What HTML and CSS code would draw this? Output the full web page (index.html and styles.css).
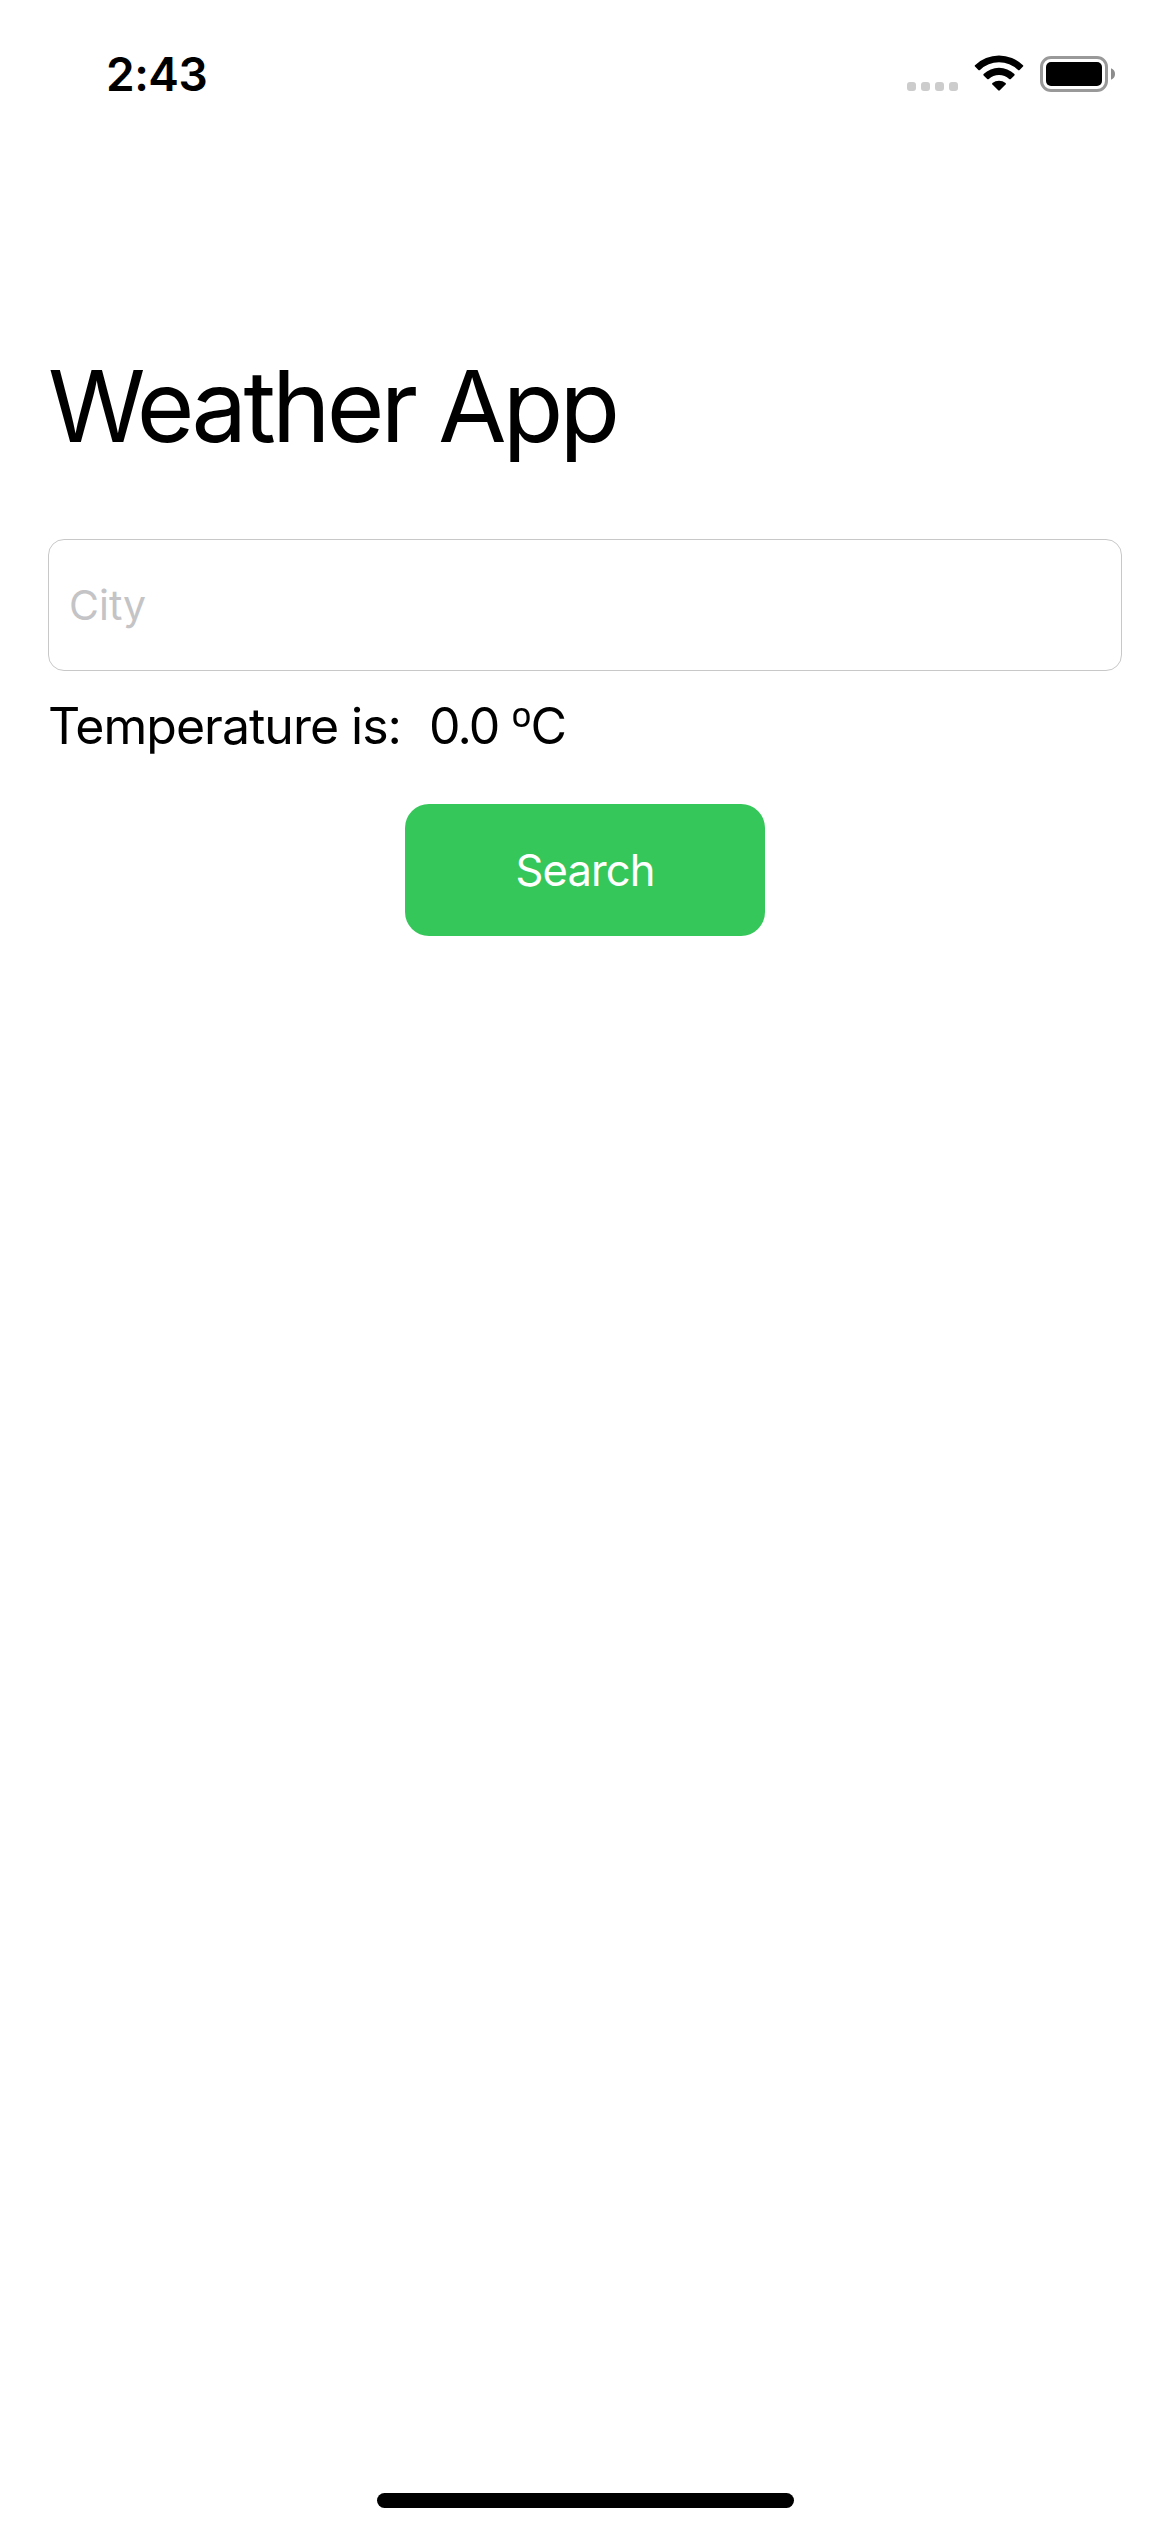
FILE: index.html
```html
<!DOCTYPE html>
<html lang="en">
<head>
<meta charset="utf-8">
<title>Weather App</title>
<link rel="stylesheet" href="styles.css">
</head>
<body>
<div class="screen">
  <header class="status-bar">
    <span class="time">2:43</span>
    <div class="indicators">
      <div class="signal"><i></i><i></i><i></i><i></i></div>
      <svg class="wifi" width="50" height="38" viewBox="0 0 50 38">
        <path d="M1 11.2A34.5 34.5 0 0 1 49 11.2Q49.6 11.9 49 12.6L45.6 16Q44.8 16.6 44 16A27.4 27.4 0 0 0 6 16Q5.2 16.6 4.4 16L1 12.6Q.4 11.9 1 11.2Z"/>
        <path d="M9.6 20A22.2 22.2 0 0 1 40.4 20Q41 20.7 40.4 21.4L36.8 25Q36 25.6 35.2 25A15 15 0 0 0 14.8 25Q14 25.6 13.2 25L9.6 21.4Q9 20.7 9.6 20Z"/>
        <path d="M18.4 29A10.4 10.4 0 0 1 31.6 29Q32.3 29.8 31.6 30.5L25.8 36.3Q25 37 24.2 36.3L18.4 30.5Q17.7 29.8 18.4 29Z"/>
      </svg>
      <svg class="battery" width="76" height="36" viewBox="0 0 76 36">
        <rect x="1.5" y="1.5" width="65" height="33" rx="9.5" fill="none" stroke="#999" stroke-width="3"/>
        <rect x="6" y="6" width="56" height="24" rx="5"/>
        <path d="M71 12.2Q75 13.8 75 18T71 23.8Z" fill="#8c8c8c"/>
      </svg>
    </div>
  </header>
  <main class="content">
    <h1 class="title">Weather App</h1>
    <input class="city" type="text" placeholder="City">
    <p class="temperature"><span class="label">Temperature is:</span><span class="value">0.0 <span class="unit">º</span>C</span></p>
    <button class="search" type="button">Search</button>
  </main>
  <div class="home-indicator"></div>
</div>
</body>
</html>
```
FILE: styles.css
```css
* {
  box-sizing: border-box;
}

body {
  margin: 0;
  background: #fff;
  color: #000;
  font-family: Inter, "Liberation Sans", sans-serif;
}

.screen {
  display: flex;
  flex-direction: column;
  width: 1170px;
  height: 2532px;
  padding-bottom: 24px;
}

.status-bar {
  display: flex;
  justify-content: space-between;
  height: 141px;
  padding: 54px 54px 0 106px;
}

.time {
  font-size: 46px;
  font-weight: 600;
  line-height: 40px;
  letter-spacing: -0.5px;
}

.indicators {
  display: flex;
  align-items: flex-start;
}

.signal {
  display: flex;
  gap: 5px;
  margin: 28px 16px 0 0;
}

.signal i {
  width: 9px;
  height: 9px;
  border-radius: 3px;
  background: #ccc;
}

.wifi {
  margin-right: 16px;
}

.battery {
  margin-top: 2px;
}

.content {
  display: flex;
  flex: 1;
  flex-direction: column;
  padding: 205px 48px 0;
}

.title {
  margin: 0;
  font-size: 99px;
  font-weight: 400;
  line-height: 120px;
  letter-spacing: -3.8px;
}

.city {
  height: 132px;
  margin-top: 73px;
  padding: 0 20px;
  border: 1px solid #c8c8c8;
  border-radius: 16px;
  background: #fff;
  font: 400 41px Inter, "Liberation Sans", sans-serif;
}

.city::placeholder {
  color: #c4c4c6;
  opacity: 1;
}

.temperature {
  display: flex;
  gap: 28px;
  margin: 25px 0 0;
  font-size: 50px;
  line-height: 60px;
  letter-spacing: -1px;
}

.value {
  letter-spacing: -1.8px;
}

.unit {
  font-weight: 300;
}

.search {
  align-self: center;
  width: 360px;
  height: 132px;
  margin-top: 48px;
  border: 0;
  border-radius: 24px;
  background: #35c759;
  color: #fff;
  font: 400 43.5px Inter, "Liberation Sans", sans-serif;
  letter-spacing: -0.9px;
}

.home-indicator {
  align-self: center;
  width: 417px;
  height: 15px;
  border-radius: 8px;
  background: #000;
}
```
